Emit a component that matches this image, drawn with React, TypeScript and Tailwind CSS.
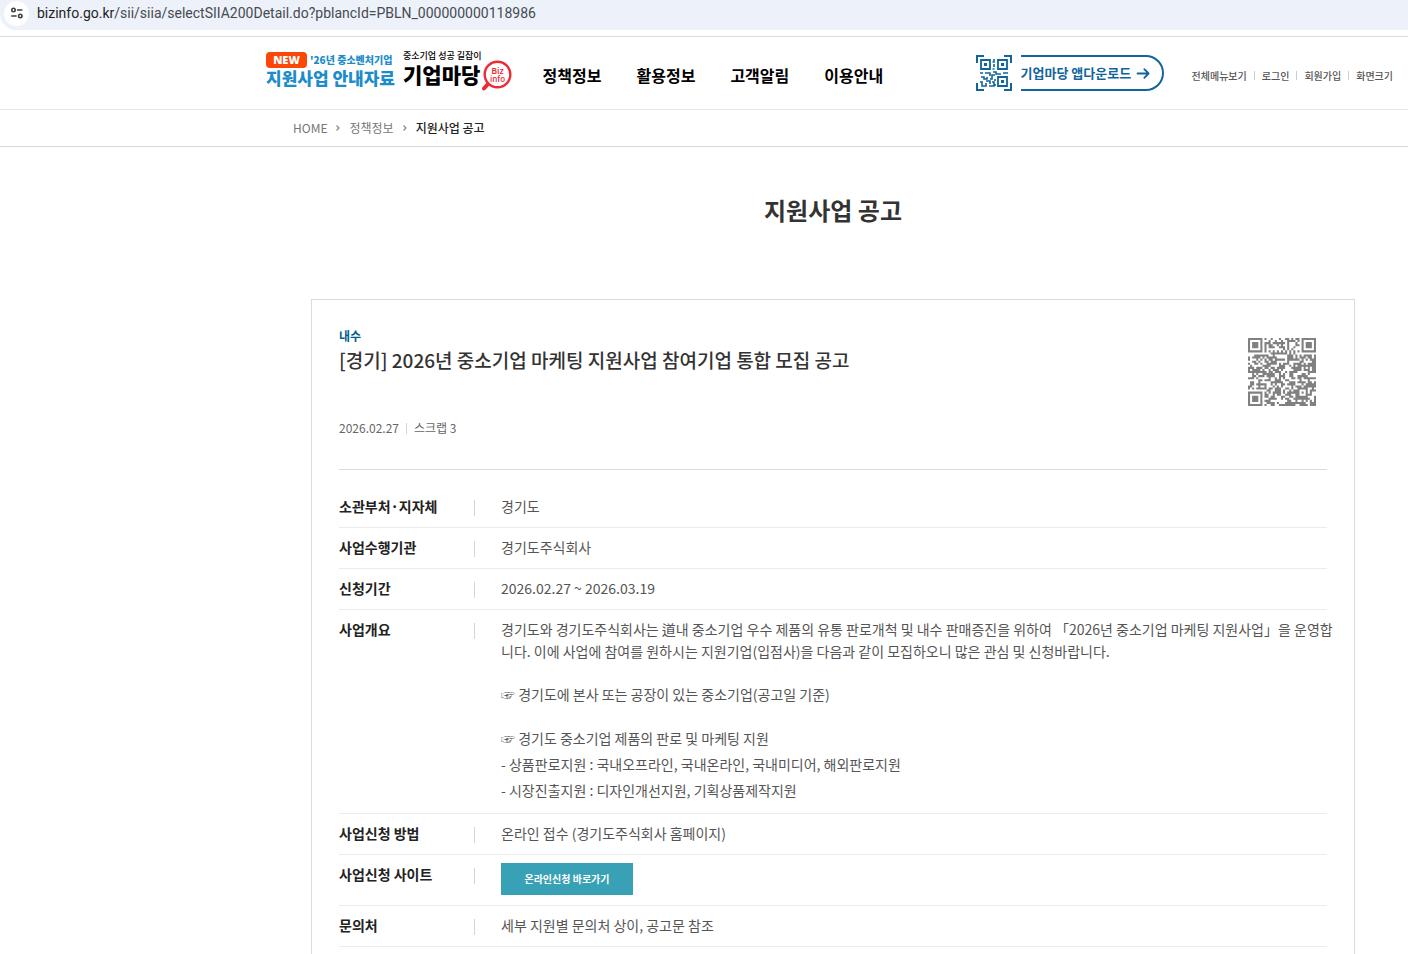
import React from "react";

const FINDER = (x: number, y: number, cx: number, cy: number) => {
  const dx = x - cx;
  const dy = y - cy;
  if (dx < -1 || dy < -1 || dx > 7 || dy > 7) return null;
  if (dx < 0 || dy < 0 || dx > 6 || dy > 6) return false;
  const ring = Math.max(Math.abs(dx - 3), Math.abs(dy - 3));
  return ring !== 2;
};

function buildCode(size: number, seed: number): string {
  let s = seed;
  let d = "";
  for (let y = 0; y < size; y++) {
    for (let x = 0; x < size; x++) {
      s = (s * 1103515245 + 12345) % 2147483648;
      let on = (s >> 16) % 100 < 56;
      const corners = [FINDER(x, y, 0, 0), FINDER(x, y, size - 7, 0), FINDER(x, y, 0, size - 7)];
      const hit = corners.find((c) => c !== null);
      if (hit !== undefined && hit !== null) on = hit;
      else if (x === 6 || y === 6) on = (x + y) % 2 === 0;
      else {
        const r = Math.max(Math.abs(x - (size - 7)), Math.abs(y - (size - 7)));
        if (r <= 2) on = r !== 1;
      }
      if (on) d += `M${x} ${y}h1v1h-1z`;
    }
  }
  return d;
}

const PAGE_CODE = buildCode(33, 118986);

const NAV = ["정책정보", "활용정보", "고객알림", "이용안내"];
const UTILS = ["전체메뉴보기", "로그인", "회원가입", "화면크기"];

function AddressBar() {
  return (
    <div className="border-b border-[#dcdcdc] pb-1.5">
      <div className="flex h-[30px] items-center rounded-bl-2xl bg-[#ecf1fa] pb-1 pl-1">
        <span className="flex size-[25px] shrink-0 items-center justify-center rounded-full bg-white">
          <svg viewBox="0 0 14 14" className="size-[14px]" fill="none" stroke="#3c4043" strokeWidth="1.6">
            <circle cx="3.5" cy="4" r="1.7" />
            <path d="M7 4h5.4M1.2 10h5.4" />
            <circle cx="10.3" cy="10" r="1.7" />
          </svg>
        </span>
        <span className="pl-2 font-[Roboto,'Noto_Sans',sans-serif] text-[14px] whitespace-nowrap text-[#474b50]">
          <span className="text-[#1f1f1f]">bizinfo.go.kr</span>
          /sii/siia/selectSIIA200Detail.do?pblancId=PBLN_000000000118986
        </span>
      </div>
    </div>
  );
}

function Logo() {
  return (
    <div className="flex shrink-0 items-center gap-2 pb-1.5">
      <a href="#guide" className="flex flex-col font-black whitespace-nowrap text-[#1c8ccb]">
        <span className="flex items-center gap-[3px]">
          <span className="flex h-4 w-[41px] items-center justify-center rounded-[4px] bg-[#fb4708] font-['Open_Sans',sans-serif] text-[11px] font-extrabold text-white">
            NEW
          </span>
          <span className="text-[10px] leading-4">'26년 중소벤처기업</span>
        </span>
        <span className="text-[17px] leading-5">지원사업 안내자료</span>
      </a>
      <a href="#home" className="flex items-center text-black">
        <span className="flex flex-col pb-1 whitespace-nowrap">
          <span className="text-[9px] leading-3 font-medium">중소기업 성공 길잡이</span>
          <span className="text-[21px] leading-6 font-black">기업마당</span>
        </span>
        <svg viewBox="2 0 30 34" className="mt-3 h-[34px] w-[30px]" role="img" aria-label="Biz info">
          <path d="M8.5 24.5L4 29.5" stroke="#ee2b35" strokeWidth="4" strokeLinecap="round" />
          <circle cx="17.5" cy="15.5" r="12.8" fill="#fff" stroke="#ee2b35" strokeWidth="2.4" />
          <text x="17.5" y="15" textAnchor="middle" fontSize="9" fontWeight="600" fill="#ee2b35" fontFamily="Open Sans, sans-serif">Biz</text>
          <text x="17.5" y="22.5" textAnchor="middle" fontSize="8" fontWeight="600" fill="#ee2b35" fontFamily="Open Sans, sans-serif">info</text>
        </svg>
      </a>
    </div>
  );
}

function AppDownload() {
  return (
    <a href="#app" className="flex shrink-0 items-center gap-[9px] text-[#0f659c]">
      <svg viewBox="0 0 36 36" className="size-9" role="img" aria-label="QR">
        <path d="M1 8V1H8M28 1H35V8M35 28V35H28M8 35H1V28" fill="none" stroke="currentColor" strokeWidth="2" />
        <path d="M5 5h9v9h-9zM22 5h9v9h-9zM22 22h9v9h-9z" fill="none" stroke="currentColor" strokeWidth="1.8" />
        <path d="M8 8h3v3h-3zM25 8h3v3h-3zM25 25h3v3h-3z" fill="currentColor" />
        <path
          d="M18 4v3h-1.5M18 9v3M16.500 14h2M4 18h3M9 18h5v3M17 17h3v2h5M27 18h5M5 22h3v2h3v-2M14 24h2v-4h3M4 27h2v4h4v-3M10 26h4v3M13 31h5v-4h-2M19 24v2M19 29v2"
          fill="none"
          stroke="currentColor"
          strokeWidth="1.6"
        />
      </svg>
      <span className="flex h-9 w-[143px] items-center gap-1 rounded-r-full border-2 border-l-0 border-[#0f659c] text-[13px] font-bold whitespace-nowrap">
        기업마당 앱다운로드
        <svg viewBox="0 0 14 14" className="ml-px size-[14px]" fill="none" stroke="currentColor" strokeWidth="1.8" strokeLinecap="round" strokeLinejoin="round">
          <path d="M1.5 7.500h11M8.300 3.200l4.300 4.300-4.300 4.300" />
        </svg>
      </span>
    </a>
  );
}

function Header() {
  return (
    <header className="flex h-[73px] items-center border-b border-[#e8e8e8] pr-[15px] pl-[266px]">
      <Logo />
      <nav className="ml-[31px] flex shrink-0 gap-[35px] pt-1 text-[16px] font-bold text-black">
        {NAV.map((n) => (
          <a key={n} href="#menu" className="whitespace-nowrap">{n}</a>
        ))}
      </nav>
      <div className="ml-auto flex shrink-0 items-center gap-7">
        <AppDownload />
        <ul className="flex items-center pt-1 text-[10px] font-medium text-[#555]">
          {UTILS.map((u, i) => (
            <li key={u} className="flex items-center whitespace-nowrap">
              {i > 0 && <span className="mx-[7px] h-[9px] w-px bg-[#ccc]" />}
              <a href="#util">{u}</a>
            </li>
          ))}
        </ul>
      </div>
    </header>
  );
}

function Chevron() {
  return (
    <svg viewBox="0 0 6 8" className="h-2 w-1.5" fill="none" stroke="#888" strokeWidth="1.2">
      <path d="M1.5 1.5L4 4 1.5 6.5" />
    </svg>
  );
}

function Row({ label, children }: { label: string; children: React.ReactNode }) {
  return (
    <div className="flex border-b border-[#ebebeb] pt-2 pb-2.5 text-[14px] leading-[22px]">
      <dt className="w-[136px] shrink-0 font-bold text-[#222]">{label}</dt>
      <span className="mt-[5px] -ml-px h-4 w-px shrink-0 bg-[#d5d5d5]" />
      <dd className="min-w-0 flex-1 pl-[26px] text-[#555]">{children}</dd>
    </div>
  );
}

export default function App() {
  return (
    <div className="h-screen overflow-hidden bg-white font-['Noto_Sans_CJK_KR',sans-serif]">
      <AddressBar />
      <Header />
      <nav className="flex h-[37px] items-center gap-2 border-b border-[#d9d9d9] pl-[293px] text-[12px] text-[#777]">
        <a href="#home">HOME</a>
        <Chevron />
        <a href="#info">정책정보</a>
        <Chevron />
        <span className="font-medium text-[#222]">지원사업 공고</span>
      </nav>
      <main className="pr-[53px] pl-[311px]">
        <h1 className="pt-[45px] text-center text-[24px] leading-9 font-bold text-[#333]">지원사업 공고</h1>
        <article className="mt-[71px] border border-[#d9dbdc] px-[27px] pt-[27px] pb-10">
          <div className="flex justify-between border-b border-[#d9dbdc] pb-[31px]">
            <div>
              <p className="text-[12px] leading-[18px] font-bold text-[#005c8f]">내수</p>
              <h2 className="text-[19px] leading-[30px] font-medium text-[#333]">
                [경기] 2026년 중소기업 마케팅 지원사업 참여기업 통합 모집 공고
              </h2>
              <p className="mt-[43px] flex items-center text-[12px] leading-5 text-[#666]">
                2026.02.27
                <span className="mx-[7px] h-[11px] w-px bg-[#d5d5d5]" />
                스크랩 3
              </p>
            </div>
            <svg viewBox="0 0 33 33" className="mt-[11px] mr-[11px] size-[68px]" role="img" aria-label="QR">
              <path d={PAGE_CODE} fill="#808080" />
            </svg>
          </div>
          <dl className="pt-[17px]">
            <Row label="소관부처·지자체">경기도</Row>
            <Row label="사업수행기관">경기도주식회사</Row>
            <Row label="신청기간">2026.02.27 ~ 2026.03.19</Row>
            <Row label="사업개요">
              <p className="-mr-2">
                경기도와 경기도주식회사는 道내 중소기업 우수 제품의 유통 판로개척 및 내수 판매증진을 위하여 「2026년 중소기업 마케팅 지원사업」을 운영합니다. 이에 사업에 참여를 원하시는 지원기업(입점사)을 다음과 같이 모집하오니 많은 관심 및 신청바랍니다.
              </p>
              <p className="mt-[21px]">☞ 경기도에 본사 또는 공장이 있는 중소기업(공고일 기준)</p>
              <p className="mt-5 leading-[26px]">
                ☞ 경기도 중소기업 제품의 판로 및 마케팅 지원
                <br />- 상품판로지원 : 국내오프라인, 국내온라인, 국내미디어, 해외판로지원
                <br />- 시장진출지원 : 디자인개선지원, 기획상품제작지원
              </p>
            </Row>
            <Row label="사업신청 방법">온라인 접수 (경기도주식회사 홈페이지)</Row>
            <Row label="사업신청 사이트">
              <button type="button" className="block h-8 w-[132px] bg-[#38a1b6] text-[10px] font-bold text-white">
                온라인신청 바로가기
              </button>
            </Row>
            <Row label="문의처">세부 지원별 문의처 상이, 공고문 참조</Row>
          </dl>
        </article>
      </main>
    </div>
  );
}
